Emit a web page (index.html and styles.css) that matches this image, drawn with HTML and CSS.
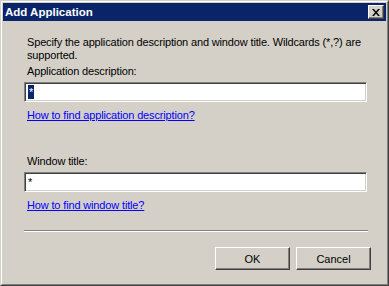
FILE: index.html
```html
<!DOCTYPE html>
<html lang="en">
<head>
<meta charset="UTF-8">
<title>Add Application</title>
<link rel="stylesheet" href="styles.css">
</head>
<body>
<div class="window">
<div class="frame">
<div class="titlebar">
<span class="title">Add Application</span>
<div class="close-btn">
<svg width="8" height="7" viewBox="0 0 8 7"><path d="M0 0h2l2 2.5 2-2.5h2l-3 3.5 3 3.5h-2l-2-2.5-2 2.5h-2l3-3.5z" fill="#000"/></svg>
</div>
</div>

<div class="content">
<p class="intro">Specify the application description and window title. Wildcards (*,?) are<br>supported.</p>

<div class="label">Application description:</div>
<div class="field"><span class="selected">*</span></div>
<a class="help" href="#">How to find application description?</a>

<div class="label label-second">Window title:</div>
<div class="field">*</div>
<a class="help" href="#">How to find window title?</a>

<div class="separator"></div>

<div class="buttons">
<div class="btn">OK</div>
<div class="btn">Cancel</div>
</div>
</div>
</div>
</div>
</body>
</html>
```

FILE: styles.css
```css
body {
margin: 0;
padding: 0;
background: #d4d0c8;
font-family: 'Liberation Sans', Arial, sans-serif;
font-size: 11px;
color: #000;
}

.window {
width: 389px;
height: 286px;
box-sizing: border-box;
border: 1px solid;
border-color: #d4d0c8 #404040 #404040 #d4d0c8;
}

.frame {
height: 100%;
box-sizing: border-box;
border: 1px solid;
border-color: #fff #808080 #808080 #fff;
padding: 1px;
}

.titlebar {
height: 18px;
background: #0a246a;
display: flex;
align-items: center;
justify-content: space-between;
padding: 0 2px 0 2px;
}

.title {
color: #fff;
font-weight: bold;
font-size: 11.5px;
}

.close-btn {
width: 16px;
height: 14px;
box-sizing: border-box;
background: #d4d0c8;
border: 1px solid;
border-color: #fff #404040 #404040 #fff;
box-shadow: inset -1px -1px #808080;
display: flex;
align-items: center;
justify-content: center;
padding-right: 1px;
}

.content {
padding: 15px 19px 0 21px;
letter-spacing: -0.15px;
}

.intro {
margin: 0;
padding-left: 3px;
line-height: 13px;
white-space: nowrap;
}

.label {
margin-top: 3px;
padding-left: 3px;
line-height: 13px;
}

.label-second {
margin-top: 33px;
}

.field {
margin-top: 4px;
height: 20px;
box-sizing: border-box;
background: #fff;
border: 1px solid;
border-color: #808080 #fff #fff #808080;
box-shadow: inset 1px 1px #404040, inset -1px -1px #d4d0c8;
padding: 2px 3px;
line-height: 14px;
}

.selected {
background: #0a246a;
color: #fff;
display: inline-block;
padding: 0 1px;
}

.help {
display: block;
margin-top: 7px;
padding-left: 3px;
line-height: 13px;
color: #0000ff;
text-decoration: underline;
width: max-content;
}

.separator {
margin-top: 18px;
margin-right: -1px;
height: 1px;
background: #808080;
border-bottom: 1px solid #fff;
}

.buttons {
margin-top: 15px;
margin-right: -4px;
display: flex;
justify-content: flex-end;
gap: 6px;
}

.btn {
width: 75px;
height: 23px;
box-sizing: border-box;
border: 1px solid;
border-color: #fff #404040 #404040 #fff;
box-shadow: inset -1px -1px #808080;
display: flex;
align-items: center;
justify-content: center;
letter-spacing: 0;
}
```
